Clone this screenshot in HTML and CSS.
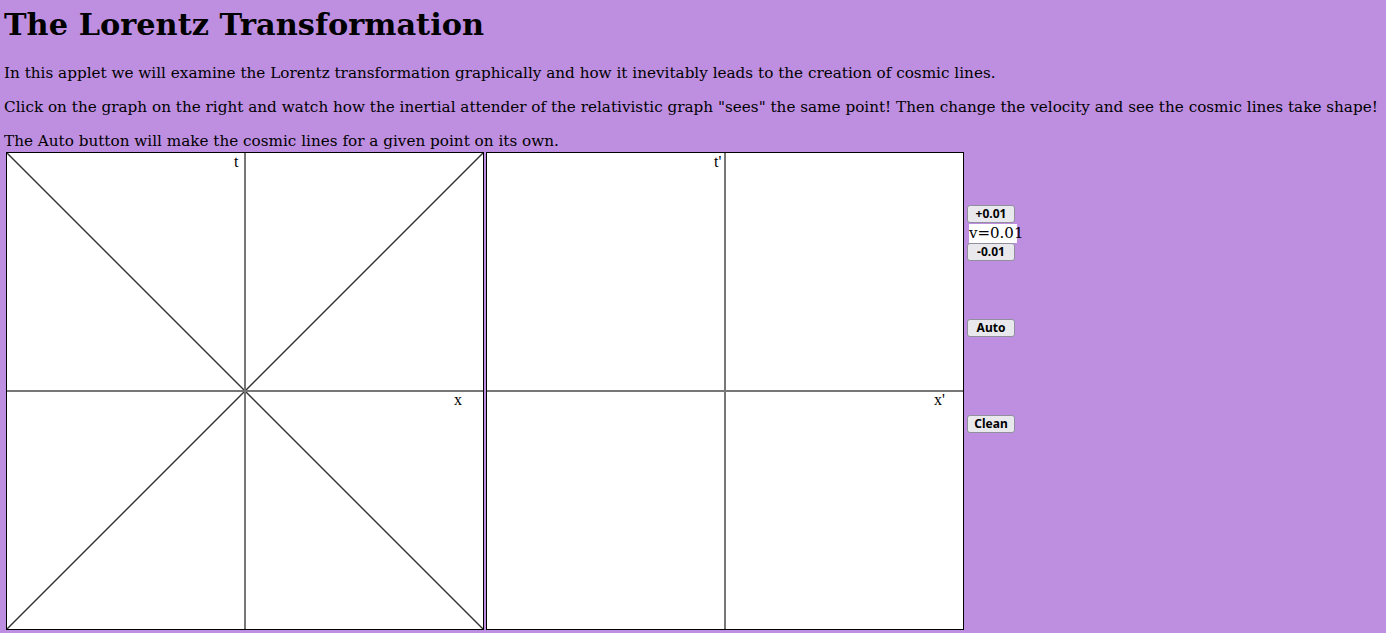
FILE: index.html
```html
<!DOCTYPE html>
<html lang="en">
<head>
    <meta charset="UTF-8">
    <title>The Lorentz Transformation</title>
    <link rel="stylesheet" href="styles.css">
</head>
<body>
    <h1>The Lorentz Transformation</h1>
    <p>In this applet we will examine the Lorentz transformation graphically and how it inevitably leads to the creation of cosmic lines.</p>
    <p>Click on the graph on the right and watch how the inertial attender of the relativistic graph "sees" the same point! Then change the velocity and see the cosmic lines take shape!</p>
    <p class="last">The Auto button will make the cosmic lines for a given point on its own.</p>

    <div class="applet">
        <div class="graph">
            <svg width="476" height="476" viewBox="0 0 476 476">
                <line x1="0" y1="0" x2="476" y2="476" class="light"/>
                <line x1="476" y1="0" x2="0" y2="476" class="light"/>
                <line x1="238" y1="0" x2="238" y2="476" class="axis"/>
                <line x1="0" y1="238" x2="476" y2="238" class="axis"/>
                <text x="227" y="14">t</text>
                <text x="447" y="252">x</text>
            </svg>
        </div>
        <div class="graph">
            <svg width="476" height="476" viewBox="0 0 476 476">
                <line x1="238" y1="0" x2="238" y2="476" class="axis"/>
                <line x1="0" y1="238" x2="476" y2="238" class="axis"/>
                <text x="227" y="14">t'</text>
                <text x="447" y="252">x'</text>
            </svg>
        </div>
        <div class="controls">
            <button class="btn">+0.01</button>
            <div class="velocity">v=0.01</div>
            <button class="btn">-0.01</button>
            <button class="btn auto">Auto</button>
            <button class="btn clean">Clean</button>
        </div>
    </div>
</body>
</html>
```

FILE: styles.css
```css
body {
    margin: 0 4px;
    background-color: #be8fe0;
    font-family: "DejaVu Serif", serif;
    font-size: 15.23px;
    color: #000;
}

h1 {
    margin: 6px 0 22px;
    font-size: 30.4px;
}

p {
    margin: 15px 0;
    line-height: 19px;
}

p.last {
    margin-bottom: 0;
}

.applet {
    display: flex;
    align-items: flex-start;
    gap: 2px;
    margin: 1px 0 0 2px;
}

.graph {
    border: 1px solid #000;
    background-color: #fff;
    line-height: 0;
}

.graph svg {
    display: block;
}

.graph .light {
    stroke: #333;
    stroke-width: 1.4;
}

.graph .axis {
    stroke: #777;
    stroke-width: 2;
}

.graph text {
    font-family: "Liberation Serif", serif;
    font-size: 16px;
    fill: #000;
}

.controls {
    display: flex;
    flex-direction: column;
    align-items: flex-start;
    padding-top: 53px;
    margin-left: 1px;
}

.btn {
    width: 48px;
    height: 18px;
    padding: 0;
    border: 1px solid #8f8f9d;
    border-radius: 3px;
    background-color: #e9e9ed;
    font-family: "Noto Sans", sans-serif;
    font-weight: bold;
    font-size: 12px;
    line-height: 16px;
    color: #000;
}

.velocity {
    width: 48px;
    height: 19px;
    margin: 1px 0 0 2px;
    background-color: #fff;
    white-space: nowrap;
    font-size: 15px;
    line-height: 19px;
}

.auto {
    margin-top: 58px;
}

.clean {
    margin-top: 78px;
}
```
